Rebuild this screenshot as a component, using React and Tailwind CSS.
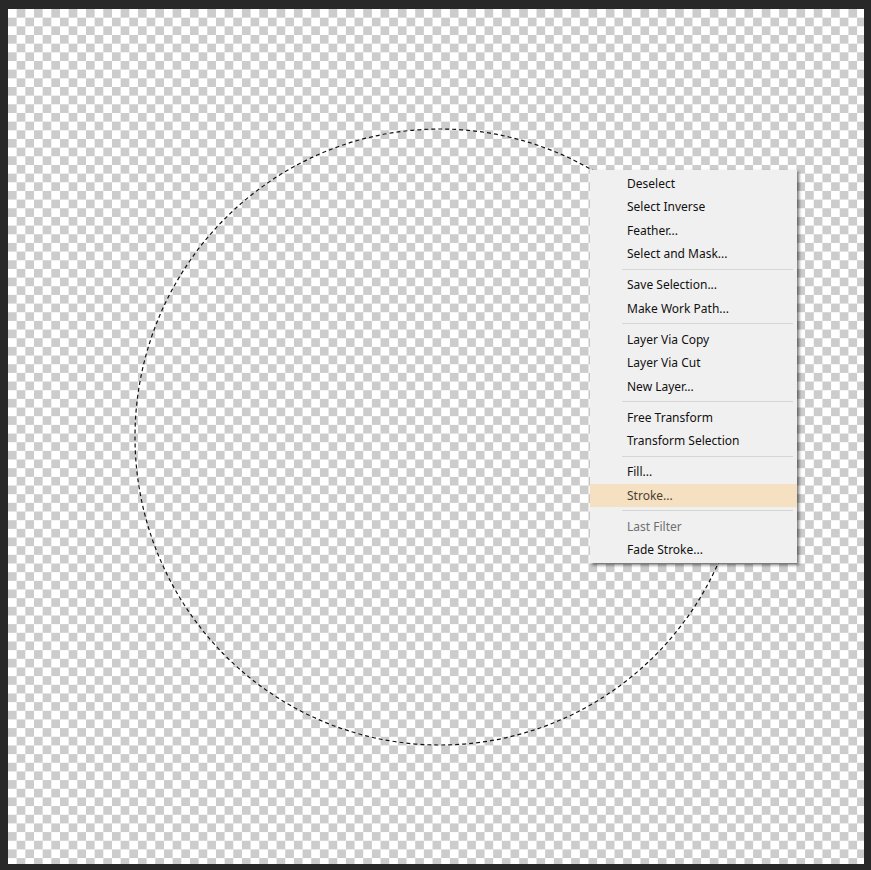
import React from "react";

const groups = [
  ["Deselect", "Select Inverse", "Feather...", "Select and Mask..."],
  ["Save Selection...", "Make Work Path..."],
  ["Layer Via Copy", "Layer Via Cut", "New Layer..."],
  ["Free Transform", "Transform Selection"],
  ["Fill...", "Stroke..."],
  ["Last Filter", "Fade Stroke..."],
];

function Item({ label }) {
  const hot = label === "Stroke...";
  const dim = label === "Last Filter";
  return (
    <div
      className={
        "h-[23.5px] flex items-center pl-[37px] pt-[1px] text-[12px] leading-none " +
        (hot ? "bg-[#f5e1c2] text-[#4a4034] " : "") +
        (dim ? "text-[#6f6f6f] " : "") +
        (!hot && !dim ? "text-[#111111]" : "")
      }
    >
      {label}
    </div>
  );
}

export default function App() {
  return (
    <div className="w-[871px] h-[870px] bg-[#282828] pl-[8px] pt-[9px] pr-[7px] pb-[6px] font-['Noto_Sans','Open_Sans',sans-serif]">
      <div className="relative w-full h-full overflow-hidden bg-[conic-gradient(#cccccc_25%,#ffffff_0_50%,#cccccc_0_75%,#ffffff_0)] bg-[length:17.33px_17.33px]">
        <svg className="absolute left-0 top-0" width="856" height="855">
          <ellipse
            cx="432"
            cy="428"
            rx="305"
            ry="308"
            fill="none"
            stroke="#ffffff"
            strokeWidth="1.2"
            strokeOpacity="0.35"
          />
          <ellipse
            cx="432"
            cy="428"
            rx="305"
            ry="308"
            fill="none"
            stroke="#111111"
            strokeWidth="1.2"
            strokeDasharray="4 3"
          />
        </svg>
        <div className="absolute left-[582px] top-[161px] w-[207px] bg-[#f0f0f0] py-[1.5px] shadow-[2px_2px_3px_rgba(0,0,0,0.55)]">
          {groups.map((g, i) => (
            <div key={i}>
              {i > 0 && (
                <div className="h-[7.5px] flex items-center pl-[32px] pr-[4px]">
                  <div className="w-full border-t border-[#d6d6d6]" />
                </div>
              )}
              {g.map((l) => (
                <Item key={l} label={l} />
              ))}
            </div>
          ))}
        </div>
      </div>
    </div>
  );
}
